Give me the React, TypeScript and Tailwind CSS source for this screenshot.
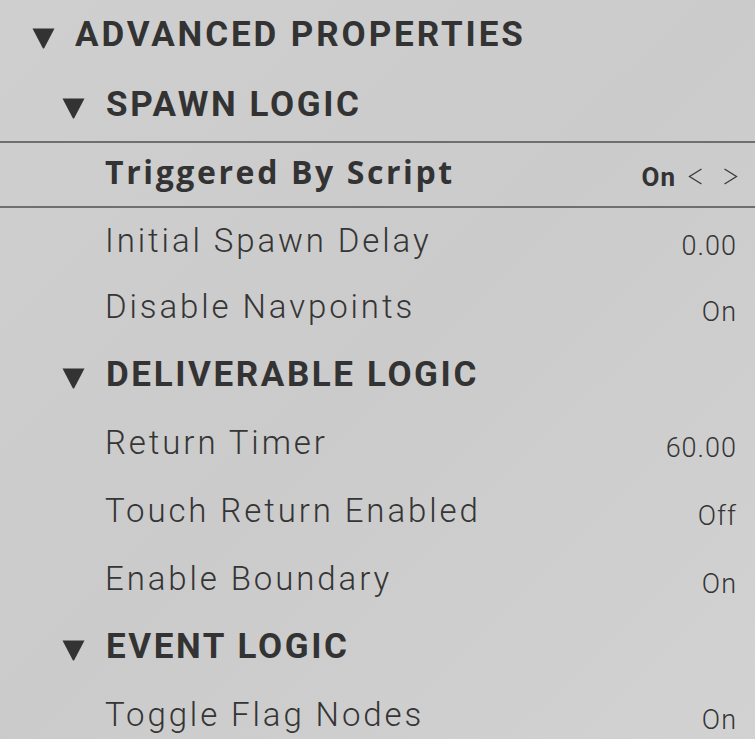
import React from "react";

type Row =
  | { kind: "section"; label: string; level: 0 | 1 }
  | { kind: "option"; label: string; value: string; active?: boolean };

const ROWS: Row[] = [
  { kind: "section", label: "ADVANCED PROPERTIES", level: 0 },
  { kind: "section", label: "SPAWN LOGIC", level: 1 },
  { kind: "option", label: "Triggered By Script", value: "On", active: true },
  { kind: "option", label: "Initial Spawn Delay", value: "0.00" },
  { kind: "option", label: "Disable Navpoints", value: "On" },
  { kind: "section", label: "DELIVERABLE LOGIC", level: 1 },
  { kind: "option", label: "Return Timer", value: "60.00" },
  { kind: "option", label: "Touch Return Enabled", value: "Off" },
  { kind: "option", label: "Enable Boundary", value: "On" },
  { kind: "section", label: "EVENT LOGIC", level: 1 },
  { kind: "option", label: "Toggle Flag Nodes", value: "On" },
];

function Caret() {
  return (
    <svg width="23" height="21" viewBox="0 0 23 21" className="shrink-0">
      <path d="M0.5 0.5 H22.5 L12.3 20 Q11.5 21 10.7 20 Z" fill="#333333" />
    </svg>
  );
}

function Chevron({ dir }: { dir: "left" | "right" }) {
  return (
    <svg width="15" height="17" viewBox="0 0 15 17" className="shrink-0">
      <path
        d={dir === "left" ? "M13.5 1 L1.5 8.5 L13.5 16" : "M1.5 1 L13.5 8.5 L1.5 16"}
        fill="none"
        stroke="#3a3a3a"
        strokeWidth="1.3"
      />
    </svg>
  );
}

function SectionRow({ label, level, h }: { label: string; level: 0 | 1; h: string }) {
  return (
    <div className={`flex items-center ${h} ${level === 0 ? "pl-[32px]" : "pl-[62px]"}`}>
      <div className="mt-[8px]">
        <Caret />
      </div>
      <span
        className={`${level === 0 ? "ml-[20px] tracking-[2.9px]" : "ml-[21px] tracking-[2.6px]"} text-[35px] leading-none font-bold text-[#333333]`}
      >
        {label}
      </span>
    </div>
  );
}

function OptionRow({ label, value, h }: { label: string; value: string; h: string }) {
  return (
    <div className={`flex items-center justify-between ${h} pl-[105px] pr-[18px]`}>
      <span className="text-[33px] leading-none font-light tracking-[2.9px] text-[#353535]">
        {label}
      </span>
      <span className="mt-[12px] text-[27px] leading-none font-light tracking-[1px] text-[#353535]">
        {value}
      </span>
    </div>
  );
}

function ActiveRow({ label, value }: { label: string; value: string }) {
  return (
    <div className="flex items-center justify-between h-[67px] border-y-2 border-[#6f6f6f] pl-[105px] pr-[17px] pb-[6px]">
      <span
        className="text-[32px] leading-none font-bold tracking-[2.6px] text-[#333333]"
        style={{ fontFamily: "'Open Sans', sans-serif" }}
      >
        {label}
      </span>
      <div className="flex items-center gap-[8px] mt-[10px]">
        <span className="text-[26px] leading-none font-bold tracking-[1px] text-[#333333] mr-[4px]">
          {value}
        </span>
        <Chevron dir="left" />
        <span className="w-[4px]" />
        <Chevron dir="right" />
      </div>
    </div>
  );
}

const HEIGHTS = [
  "h-[68px]",
  "h-[73px]",
  "",
  "h-[64px]",
  "h-[68px]",
  "h-[68px]",
  "h-[68px]",
  "h-[68px]",
  "h-[68px]",
  "h-[68px]",
  "h-[68px]",
];

export default function App() {
  return (
    <div
      className="w-[755px] h-[739px] overflow-hidden bg-gradient-to-br from-[#cfcfcf] via-[#cbcbcb] to-[#d2d2d2]"
      style={{ fontFamily: "Roboto, 'Liberation Sans', sans-serif" }}
    >
      {ROWS.map((row, i) =>
        row.kind === "section" ? (
          <SectionRow key={i} label={row.label} level={row.level} h={HEIGHTS[i]} />
        ) : row.active ? (
          <ActiveRow key={i} label={row.label} value={row.value} />
        ) : (
          <OptionRow key={i} label={row.label} value={row.value} h={HEIGHTS[i]} />
        )
      )}
    </div>
  );
}
